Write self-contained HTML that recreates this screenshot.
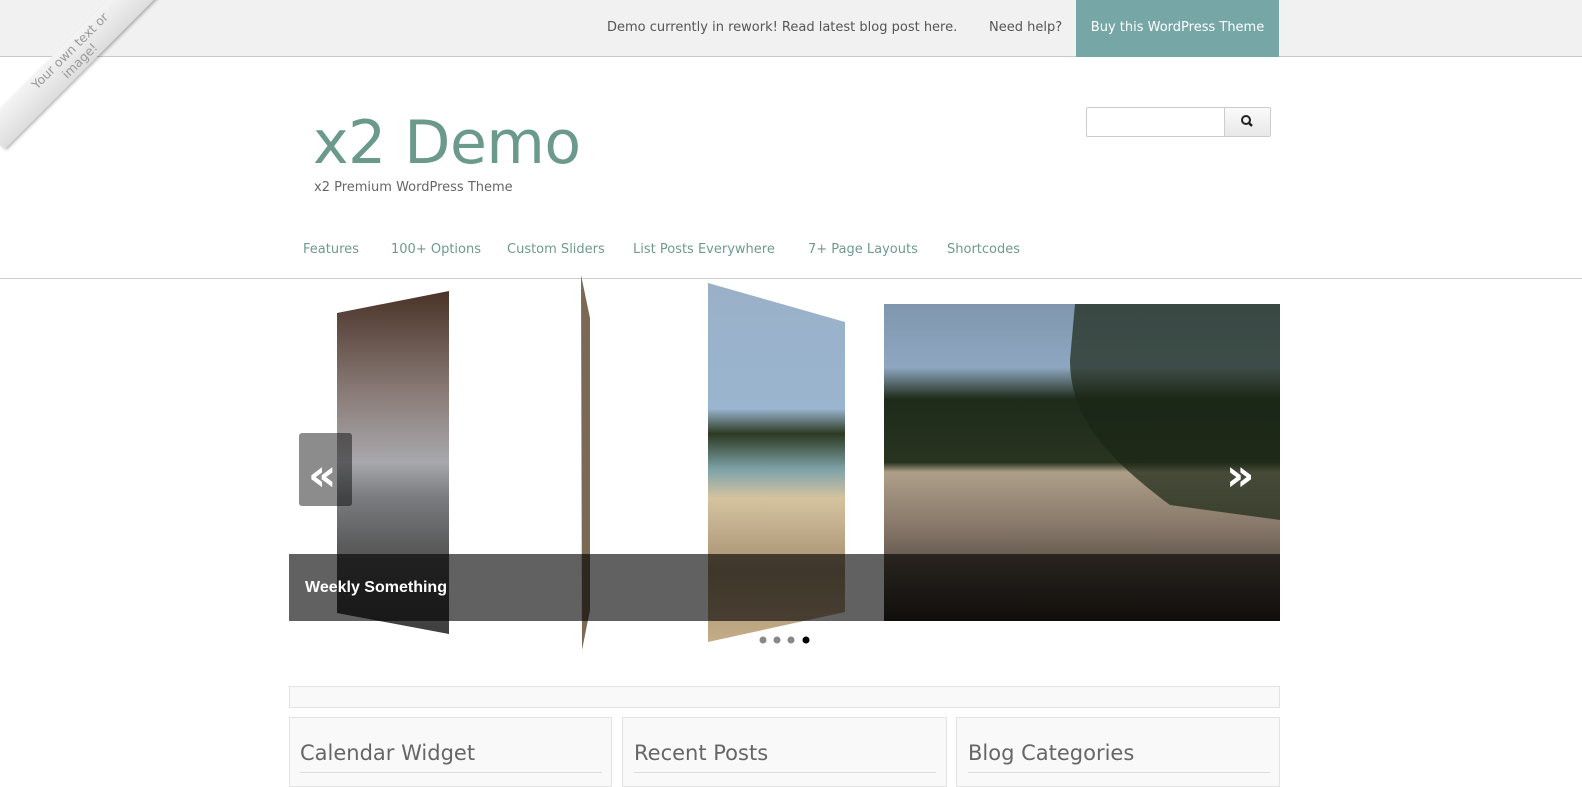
<!DOCTYPE html>
<html><head><meta charset="utf-8"><style>
*{margin:0;padding:0;box-sizing:border-box}
body{width:1582px;height:782px;overflow:hidden;background:#fff;font-family:"DejaVu Sans","Liberation Sans",sans-serif;position:relative}
.top{position:absolute;left:0;top:0;width:1582px;height:57px;background:#f1f1f1;border-bottom:1px solid #c8c8c8}
.top span{position:absolute;top:20px;font-size:13px;color:#555}
.buy{position:absolute;left:1076px;top:0;width:203px;height:57px;background:#76a6a5;color:#fff;font-size:13px;line-height:56px;text-align:center}
.ribbon{position:absolute;left:-40px;top:40px;width:230px;height:32px;background:linear-gradient(#f4f4f4,#ddd);transform:rotate(-45deg);box-shadow:0 2px 3px rgba(0,0,0,.3);color:#999;font-size:12.5px;text-align:center;line-height:14px;padding-top:2px}
h1{position:absolute;left:313px;top:108px;font-weight:normal;font-size:60px;color:#6b9a8c;letter-spacing:-0.5px}
.tag{position:absolute;left:314px;top:180px;font-size:13px;color:#666}
.search{position:absolute;left:1086px;top:107px;width:185px;height:30px;border:1px solid #ccc;border-radius:2px;background:#fff}
.search .b{position:absolute;right:0;top:0;width:46px;height:28px;border-left:1px solid #ccc;background:linear-gradient(#fafafa,#e8e8e8)}
.nav{position:absolute;top:242px;font-size:13px;color:#6f9a8e}
.navline{position:absolute;left:0;top:278px;width:1582px;height:1px;background:#ccc}
.box{position:absolute;border:1px solid #e3e3e3;background:#f9f9f9}
.wt{position:absolute;font-size:21px;color:#666;top:741px}
</style></head><body>
<div class="top">
<span style="left:607px">Demo currently in rework! Read latest blog post here.</span>
<span style="left:989px">Need help?</span>
<div class="buy">Buy this WordPress Theme</div>
</div>
<div class="ribbon">Your own text or<br>image!</div>
<h1>x2 Demo</h1>
<div class="tag">x2 Premium WordPress Theme</div>
<div class="search"><div class="b"><svg width="46" height="28"><circle cx="21" cy="12" r="4" fill="none" stroke="#222" stroke-width="2"/><line x1="24" y1="15" x2="27" y2="18" stroke="#222" stroke-width="2.5"/></svg></div></div>
<span class="nav" style="left:303px">Features</span>
<span class="nav" style="left:391px">100+ Options</span>
<span class="nav" style="left:507px">Custom Sliders</span>
<span class="nav" style="left:633px">List Posts Everywhere</span>
<span class="nav" style="left:808px">7+ Page Layouts</span>
<span class="nav" style="left:947px">Shortcodes</span>
<div class="navline"></div>
<svg style="position:absolute;left:0;top:0" width="1582" height="782">
<defs>
<linearGradient id="g1" x1="0" y1="0" x2="0" y2="1"><stop offset="0" stop-color="#4a3328"/><stop offset=".3" stop-color="#8a7c78"/><stop offset=".5" stop-color="#a8a8ac"/><stop offset=".6" stop-color="#7a7c80"/><stop offset=".75" stop-color="#5a5a5a"/><stop offset="1" stop-color="#3e3e3e"/></linearGradient>
<linearGradient id="g3" x1="0" y1="0" x2="0" y2="1"><stop offset="0" stop-color="#9ab0c8"/><stop offset=".35" stop-color="#9ab5cf"/><stop offset=".42" stop-color="#2c3a22"/><stop offset=".52" stop-color="#7fa3a8"/><stop offset=".6" stop-color="#d5c3a0"/><stop offset=".8" stop-color="#a59070"/><stop offset="1" stop-color="#c4ad88"/></linearGradient>
<linearGradient id="g4" x1="0" y1="0" x2="0" y2="1"><stop offset="0" stop-color="#7f96ae"/><stop offset=".2" stop-color="#8ea7c0"/><stop offset=".3" stop-color="#1e2b1a"/><stop offset=".5" stop-color="#28341f"/><stop offset=".53" stop-color="#ad9f88"/><stop offset=".7" stop-color="#87786a"/><stop offset="1" stop-color="#2c261f"/></linearGradient>
</defs>
<polygon points="337,313 449,291 449,634 337,613" fill="url(#g1)"/>
<polygon points="581,275 590,318 590,610 582,650" fill="#7a6a55"/>
<polygon points="708,283 845,322 845,612 708,642" fill="url(#g3)"/>
<rect x="884" y="304" width="396" height="317" fill="url(#g4)"/>
<path d="M1075,304 L1280,304 L1280,520 L1170,505 C1110,460 1070,420 1070,360Z" fill="#1b2616" opacity=".7"/>
<rect x="289" y="554" width="991" height="67" fill="rgba(0,0,0,.62)"/>
<rect x="299" y="433" width="53" height="73" rx="3" fill="rgba(0,0,0,.45)"/>
<text x="305" y="592" font-family="Liberation Sans" font-weight="bold" font-size="16" fill="#fff">Weekly Something</text>
<text x="308" y="490" font-family="DejaVu Sans" font-weight="bold" font-size="44" fill="#fff">«</text>
<text x="1226" y="490" font-family="DejaVu Sans" font-weight="bold" font-size="44" fill="#fff">»</text>
<circle cx="763" cy="640" r="3.5" fill="#888"/><circle cx="777" cy="640" r="3.5" fill="#888"/><circle cx="791" cy="640" r="3.5" fill="#888"/><circle cx="806" cy="640" r="3.5" fill="#000"/>
</svg>
<div class="box" style="left:289px;top:686px;width:991px;height:22px"></div>
<div class="box" style="left:289px;top:717px;width:323px;height:70px"></div>
<div class="box" style="left:622px;top:717px;width:325px;height:70px"></div>
<div class="box" style="left:956px;top:717px;width:324px;height:70px"></div>
<span class="wt" style="left:300px">Calendar Widget</span>
<span class="wt" style="left:634px">Recent Posts</span>
<span class="wt" style="left:968px">Blog Categories</span>
<div style="position:absolute;left:300px;top:772px;width:302px;height:1px;background:#ddd"></div>
<div style="position:absolute;left:634px;top:772px;width:302px;height:1px;background:#ddd"></div>
<div style="position:absolute;left:968px;top:772px;width:302px;height:1px;background:#ddd"></div>
</body></html>
